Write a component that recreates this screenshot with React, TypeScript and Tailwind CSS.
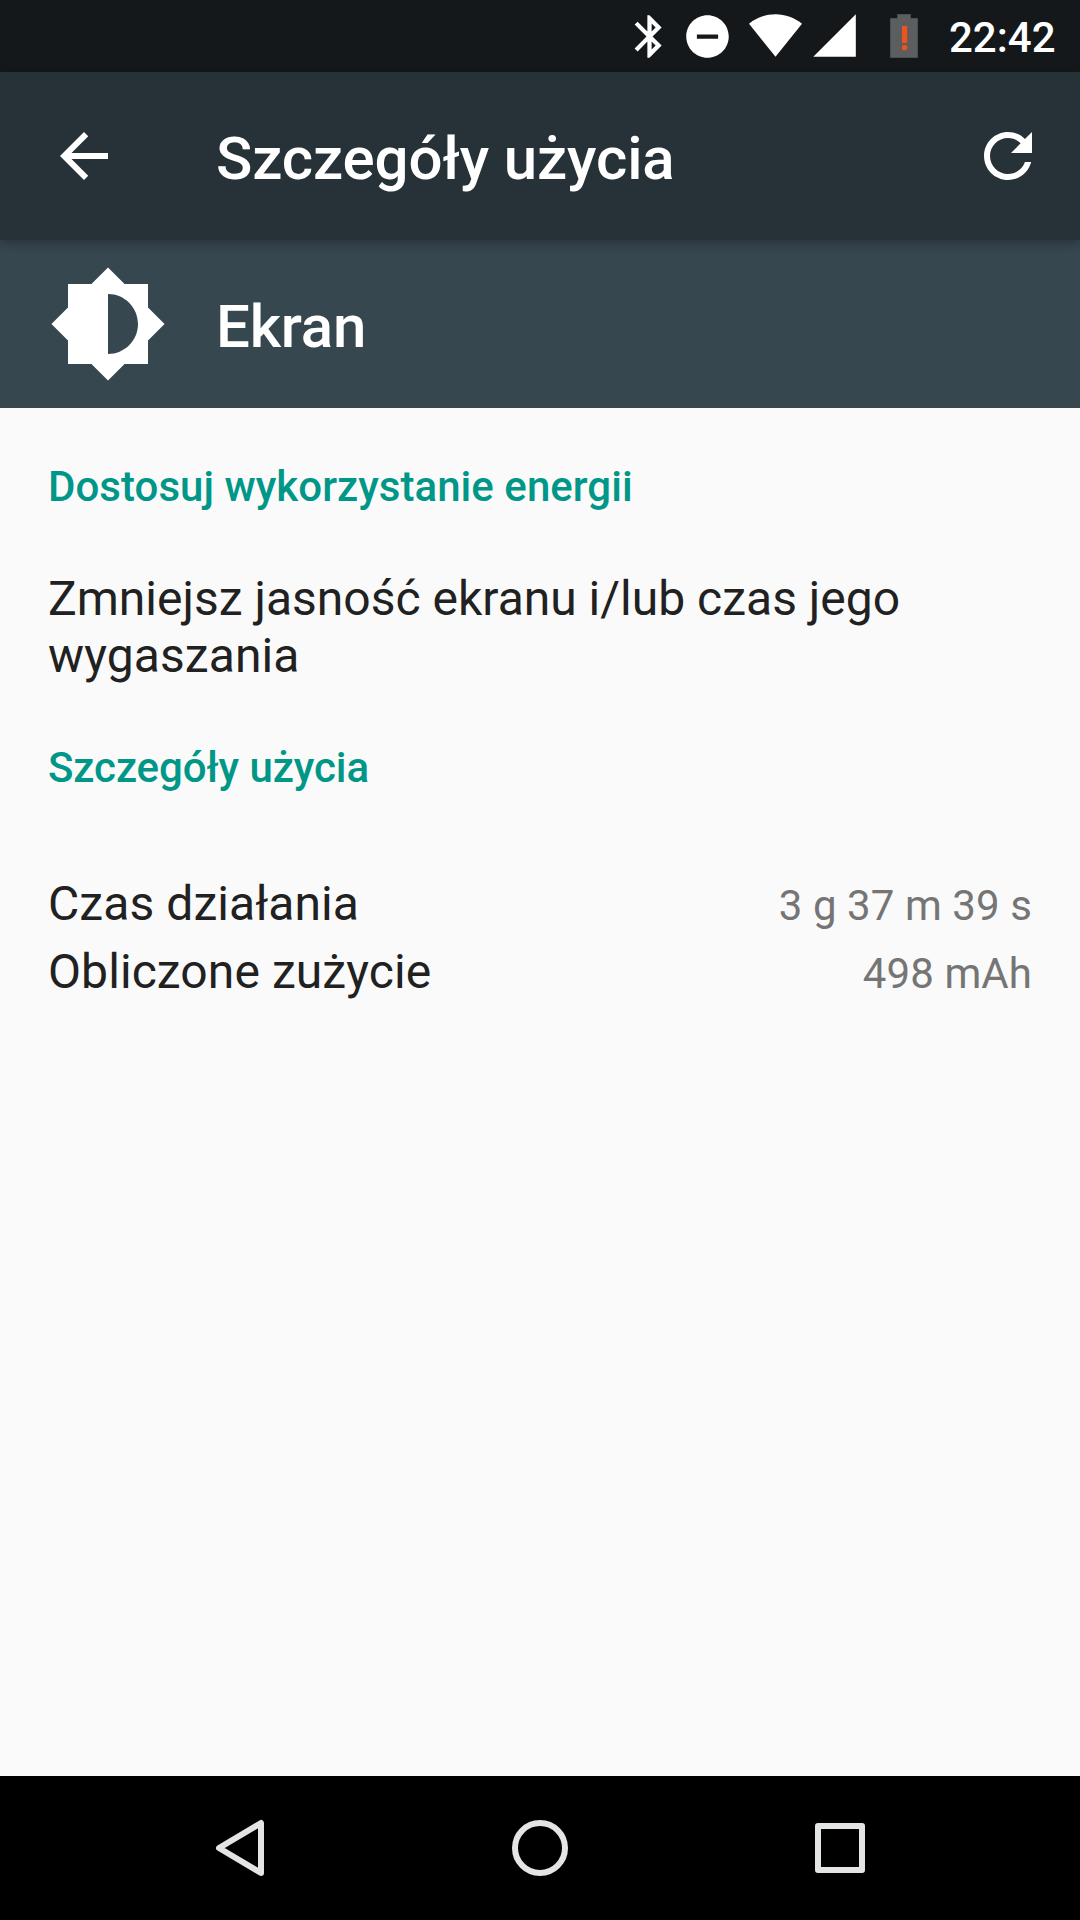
import React from "react";

const usage = [
  { label: "Czas działania", value: "3 g 37 m 39 s" },
  { label: "Obliczone zużycie", value: "498 mAh" },
];

const StatusBar = () => {
  return (
    <div className="flex h-[72px] items-start bg-[#14181b] pl-[624px] text-white">
      <svg className="mt-[11px] size-[51px] shrink-0" viewBox="0 0 24 24" fill="currentColor">
        <path d="M17.71 7.71L12 2h-1v7.59L6.41 5 5 6.41 10.59 12 5 17.59 6.41 19 11 14.41V22h1l5.71-5.71-4.3-4.29 4.3-4.29zM13 5.83l1.88 1.88L13 9.59V5.83zm1.88 10.46L13 18.17v-3.76l1.88 1.88z" />
      </svg>
      <svg className="mt-[11px] ml-[7px] size-[51px] shrink-0" viewBox="0 0 24 24" fill="currentColor">
        <path d="M12 2C6.48 2 2 6.48 2 12s4.48 10 10 10 10-4.48 10-10S17.52 2 12 2zm5 11H7v-2h10v2z" />
      </svg>
      <svg className="mt-[14px] ml-[15px] h-[43px] w-[54px] shrink-0" viewBox="0 0 54 43" fill="currentColor">
        <path d="M1 9.7C8.7 3.7 17.5 0.2 27.5 0.2s18.8 3.5 26.5 9.5L27.5 42.7z" />
      </svg>
      <svg className="mt-[14px] ml-[11px] h-[43px] w-[43px] shrink-0" viewBox="0 0 43 43" fill="currentColor">
        <path d="M0.3 42.8L42.8 0.3v42.5z" />
      </svg>
      <svg className="mt-[14px] ml-[34px] h-11 w-7 shrink-0" viewBox="0 0 28 44">
        <path fill="#5d5d5d" stroke="#41525a" d="M7.5 0.5H20.5v4h7V43.5H0.5V4.5h7z" />
        <path fill="#e95420" d="M12 12h5.2v17H12z" />
        <rect x="12" y="31" width="5.2" height="5.2" rx="1.6" fill="#e95420" />
      </svg>
      <span className="ml-[31px] mt-[2px] text-[42px] font-medium leading-[72px]">22:42</span>
    </div>
  );
};

const Toolbar = () => {
  return (
    <header className="relative z-10 flex h-[168px] items-center bg-[#263238] pl-12 pr-9 text-white shadow-[0_3px_10px_rgba(0,0,0,0.3)]">
      <svg className="size-[72px]" viewBox="0 0 24 24" fill="currentColor">
        <path d="M20 11H7.83l5.59-5.59L12 4l-8 8 8 8 1.41-1.41L7.83 13H20v-2z" />
      </svg>
      <h1 className="ml-24 flex-1 pt-1.5 text-[60px] font-medium leading-[70px] tracking-[-0.12px]">
        Szczegóły użycia
      </h1>
      <svg className="size-[72px]" viewBox="0 0 24 24" fill="currentColor">
        <path d="M17.65 6.35C16.2 4.9 14.21 4 12 4c-4.42 0-7.99 3.58-7.99 8s3.57 8 7.99 8c3.73 0 6.84-2.55 7.73-6h-2.08c-.82 2.33-3.04 4-5.65 4-3.31 0-6-2.69-6-6s2.69-6 6-6c1.66 0 3.14.69 4.22 1.78L13 11h7V4l-2.35 2.35z" />
      </svg>
    </header>
  );
};

const AppHeader = () => {
  return (
    <div className="flex h-[168px] items-center bg-[#37474f] pl-12 text-white">
      <svg className="size-[120px]" viewBox="0 0 24 24" fill="currentColor">
        <path d="M20 15.31L23.31 12 20 8.69V4h-4.69L12 .69 8.69 4H4v4.69L.69 12 4 15.31V20h4.69L12 23.31 15.31 20H20v-4.69zM12 18V6c3.31 0 6 2.69 6 6s-2.69 6-6 6z" />
      </svg>
      <h2 className="ml-12 pt-1.5 text-[60px] font-medium leading-[70px] tracking-[-0.2px]">Ekran</h2>
    </div>
  );
};

const NavBar = () => {
  return (
    <nav className="flex h-36 items-center justify-between bg-black px-[210px] text-[#e2e5e4]">
      <svg className="size-[60px]" viewBox="0 0 60 60" fill="none" stroke="currentColor" strokeWidth="6" strokeLinejoin="round">
        <path d="M51 5v50L9 30z" />
      </svg>
      <svg className="size-[60px]" viewBox="0 0 60 60" fill="none" stroke="currentColor" strokeWidth="6">
        <circle cx="30" cy="30" r="25" />
      </svg>
      <svg className="size-[60px]" viewBox="0 0 60 60" fill="none" stroke="currentColor" strokeWidth="6" strokeLinejoin="round">
        <rect x="8" y="8" width="44" height="44" />
      </svg>
    </nav>
  );
};

const App = () => {
  return (
    <div className="flex h-[1920px] w-[1080px] flex-col overflow-hidden bg-[#fafafa] font-['Roboto',sans-serif]">
      <StatusBar />
      <Toolbar />
      <AppHeader />

      <main className="flex-1 px-12 pt-[53px] text-[#212121]">
        <h3 className="text-[42px] font-medium leading-[52px] tracking-[0.04px] text-[#009688]">
          Dostosuj wykorzystanie energii
        </h3>
        <p className="mt-[57px] text-[48px] leading-[57px]">
          Zmniejsz jasność ekranu i/lub czas jego <span className="tracking-[0.1px]">wygaszania</span>
        </p>
        <h3 className="mt-[58px] text-[42px] font-medium leading-[52px] tracking-[-0.08px] text-[#009688]">
          Szczegóły użycia
        </h3>
        <div className="mt-[76px]">
          {usage.map((item) => (
            <div key={item.label} className="flex h-[68px] items-baseline justify-between">
              <span className="text-[48px] leading-[68px] tracking-[0.08px]">{item.label}</span>
              <span className="text-[42px] tracking-[0.08px] text-[#757575]">{item.value}</span>
            </div>
          ))}
        </div>
      </main>

      <NavBar />
    </div>
  );
};

export default App;
